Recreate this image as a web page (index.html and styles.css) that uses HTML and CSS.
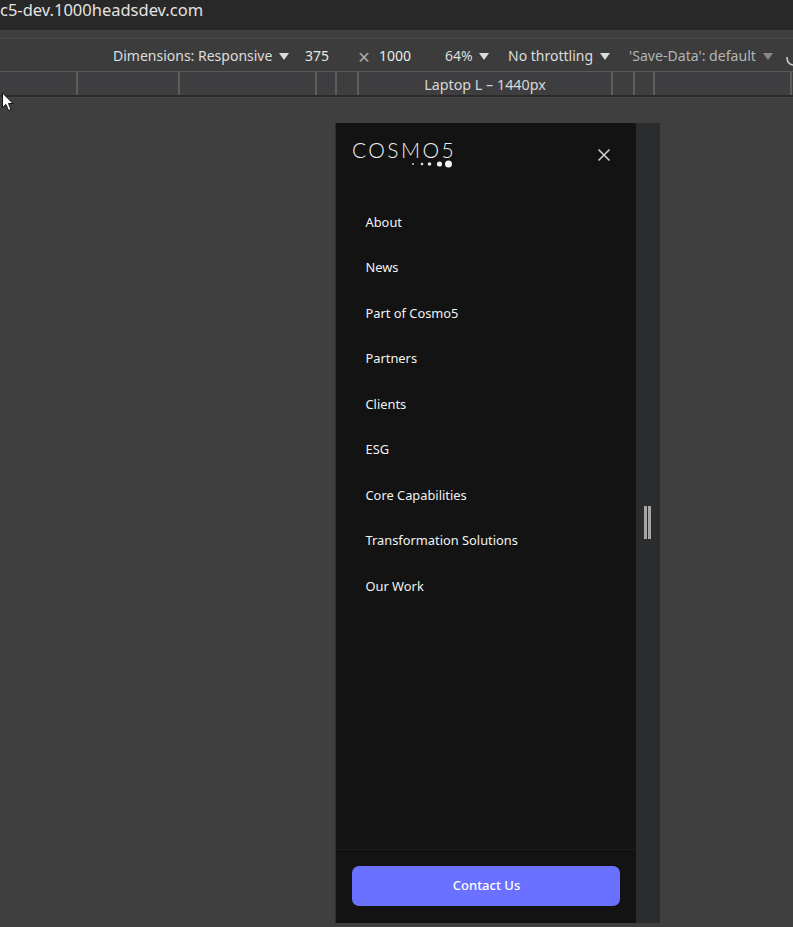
FILE: index.html
```html
<!DOCTYPE html>
<html lang="en">
<head>
  <meta charset="UTF-8" />
  <title>Device toolbar</title>
  <meta name="viewport" content="width=device-width, initial-scale=1.0" />
  <link rel="stylesheet" href="styles.css">
</head>
<body>

  <div class="address-bar">c5-dev.1000headsdev.com</div>

  <div class="toolbar">
    <span class="tool tool-dim">Dimensions: Responsive <i class="caret"></i></span>
    <span class="tool tool-w">375</span>
    <span class="tool tool-x">×</span>
    <span class="tool tool-h">1000</span>
    <span class="tool tool-zoom">64% <i class="caret"></i></span>
    <span class="tool tool-net">No throttling <i class="caret"></i></span>
    <span class="tool tool-save">'Save-Data': default <i class="caret caret-dim"></i></span>
    <svg class="rotate" width="10" height="14" viewBox="0 0 10 14">
      <path d="M1 3 C1 8 3 11 8 11" fill="none" stroke="#c8c8c8" stroke-width="1.6" />
    </svg>
  </div>

  <div class="ruler">
    <span class="seg seg-1"></span>
    <span class="seg seg-2"></span>
    <span class="seg seg-3"></span>
    <span class="seg seg-4"></span>
    <span class="seg seg-5"></span>
    <span class="seg seg-label">Laptop L – 1440px</span>
    <span class="seg seg-5"></span>
    <span class="seg seg-4"></span>
    <span class="seg seg-3"></span>
  </div>

  <svg class="cursor" width="13" height="20" viewBox="0 0 13 20">
    <path d="M1.5 1 L1.5 15.5 L5 12.5 L7.5 18.5 L10 17.5 L7.5 11.5 L12 11.5 Z" fill="#fff" stroke="#111" stroke-width="1" />
  </svg>

  <div class="stage">
    <div class="device">
      <div class="menu">
        <div class="menu-head">
          <div class="logo">
            <span class="logo-text">COSMO5</span>
            <svg class="logo-dots" width="42" height="8" viewBox="0 0 42 8">
              <circle cx="1" cy="4" r="0.9" fill="#ddd" />
              <circle cx="10" cy="4" r="1.3" fill="#e2e2e2" />
              <circle cx="17.5" cy="4" r="1.8" fill="#e6e6e6" />
              <circle cx="27.5" cy="4" r="2.6" fill="#eee" />
              <circle cx="36.5" cy="4" r="3.5" fill="#f4f4f4" />
            </svg>
          </div>
          <svg class="close" width="14" height="14" viewBox="0 0 14 14">
            <path d="M1.5 1.5 L12.5 12.5 M12.5 1.5 L1.5 12.5" stroke="#d4d4d4" stroke-width="1.5" />
          </svg>
        </div>

        <nav class="menu-list">
          <a>About</a>
          <a>News</a>
          <a>Part of Cosmo5</a>
          <a>Partners</a>
          <a>Clients</a>
          <a>ESG</a>
          <a>Core Capabilities</a>
          <a>Transformation Solutions</a>
          <a>Our Work</a>
        </nav>

        <div class="menu-foot">
          <button class="contact">Contact Us</button>
        </div>
      </div>
      <div class="scroll">
        <span class="grip"></span>
      </div>
    </div>
  </div>

</body>
</html>
```

FILE: styles.css
```css
html, body {
  height: 100%;
}
body {
  margin: 0;
  width: 793px;
  height: 927px;
  overflow: hidden;
  position: relative;
  background: #3f3f3f;
  font-family: "Noto Sans", "Open Sans", sans-serif;
  color: #e8e8e8;
}

/* browser chrome */
.address-bar {
  height: 30px;
  background: #282828;
  color: #e3e3e3;
  font-size: 16.5px;
  line-height: 20px;
  white-space: nowrap;
  margin-bottom: 8px;
}
.toolbar {
  height: 34px;
  box-sizing: border-box;
  background: #3c3c3c;
  border-top: 1px solid #4a4a4a;
  border-bottom: 1px solid #5a5a5a;
  padding-left: 113px;
  display: flex;
  align-items: center;
  position: relative;
  font-size: 14px;
  white-space: nowrap;
}
.tool {
  display: block;
  flex: none;
  color: #dcdcdc;
}
.tool-dim { width: 192px; }
.tool-w { width: 53px; color: #e8e8e8; }
.tool-x { width: 21px; color: #aaa; font-size: 21px; line-height: 20px; margin-top: 4px; }
.tool-h { width: 66px; color: #e8e8e8; }
.tool-zoom { width: 63px; }
.tool-net { width: 121px; }
.tool-save { color: #b4b4b4; font-size: 14.1px; }
.caret {
  display: inline-block;
  width: 0;
  height: 0;
  margin-left: 3px;
  vertical-align: 1px;
  border-left: 5px solid transparent;
  border-right: 5px solid transparent;
  border-top: 7px solid #dcdcdc;
}
.caret-dim {
  border-top-color: #8a8a8a;
}
.rotate {
  position: absolute;
  right: -3px;
  top: 15px;
}

.ruler {
  height: 25px;
  box-sizing: border-box;
  background: #3e3e40;
  border-bottom: 2px solid #2a2a2a;
  display: flex;
  font-size: 14.3px;
  line-height: 26px;
  color: #d8d8d8;
}
.seg {
  flex: none;
  box-sizing: border-box;
  border-right: 2px solid #5c5c5c;
  height: 23px;
}
.seg-1 { width: 78px; }
.seg-2 { width: 102px; }
.seg-3 { width: 137px; }
.seg-4 { width: 20px; }
.seg-5 { width: 22px; }
.seg-label {
  width: 254px;
  text-align: center;
}
.ruler .seg:nth-child(7) { width: 22px; }
.ruler .seg:nth-child(8) { width: 20px; }

.cursor {
  position: absolute;
  left: 1px;
  top: 92px;
}

/* emulated page */
.stage {
  padding-top: 25px;
  padding-left: 335px;
  border-top: 1px solid #474747;
}
.device {
  width: 325px;
  height: 800px;
  box-sizing: border-box;
  background: #2b2c2e;
  border-left: 1px solid #2e2e2e;
  display: flex;
}
.menu {
  width: 300px;
  background: #131313;
  display: flex;
  flex-direction: column;
}
.menu-head {
  height: 76.7px;
  box-sizing: border-box;
  padding: 17px 25px 0 16px;
  display: flex;
  justify-content: space-between;
}
.logo {
  width: 102px;
  display: flex;
  flex-direction: column;
}
.logo-text {
  font-family: "Lato", "Noto Sans", sans-serif;
  font-weight: 300;
  font-size: 21px;
  line-height: 20px;
  letter-spacing: 2.4px;
  color: #f0f0f0;
  white-space: nowrap;
}
.logo-dots {
  align-self: flex-end;
  margin-top: 0;
}
.close {
  margin-top: 8px;
}
.menu-list {
  flex: 1;
  padding: 0 0 0 29.5px;
  display: flex;
  flex-direction: column;
}
.menu-list a {
  display: block;
  height: 45.5px;
  line-height: 45.5px;
  font-size: 12.85px;
  color: #f2f2f2;
}
.menu-foot {
  height: 74px;
  box-sizing: border-box;
  border-top: 1px solid #1e1e1e;
  padding: 16px 16px 0;
}
.contact {
  display: block;
  width: 268px;
  height: 40px;
  border: none;
  border-radius: 7px;
  background: #6a70ff;
  color: #fff;
  font-family: inherit;
  font-size: 13px;
  font-weight: 550;
  line-height: 36px;
  padding: 0 0 2px 1px;
  cursor: pointer;
}
.scroll {
  flex: 1;
  padding: 383px 0 0 8px;
}
.grip {
  display: block;
  box-sizing: border-box;
  width: 7px;
  height: 33px;
  border-left: 3px solid #a6a6a6;
  border-right: 3px solid #a6a6a6;
}
```
